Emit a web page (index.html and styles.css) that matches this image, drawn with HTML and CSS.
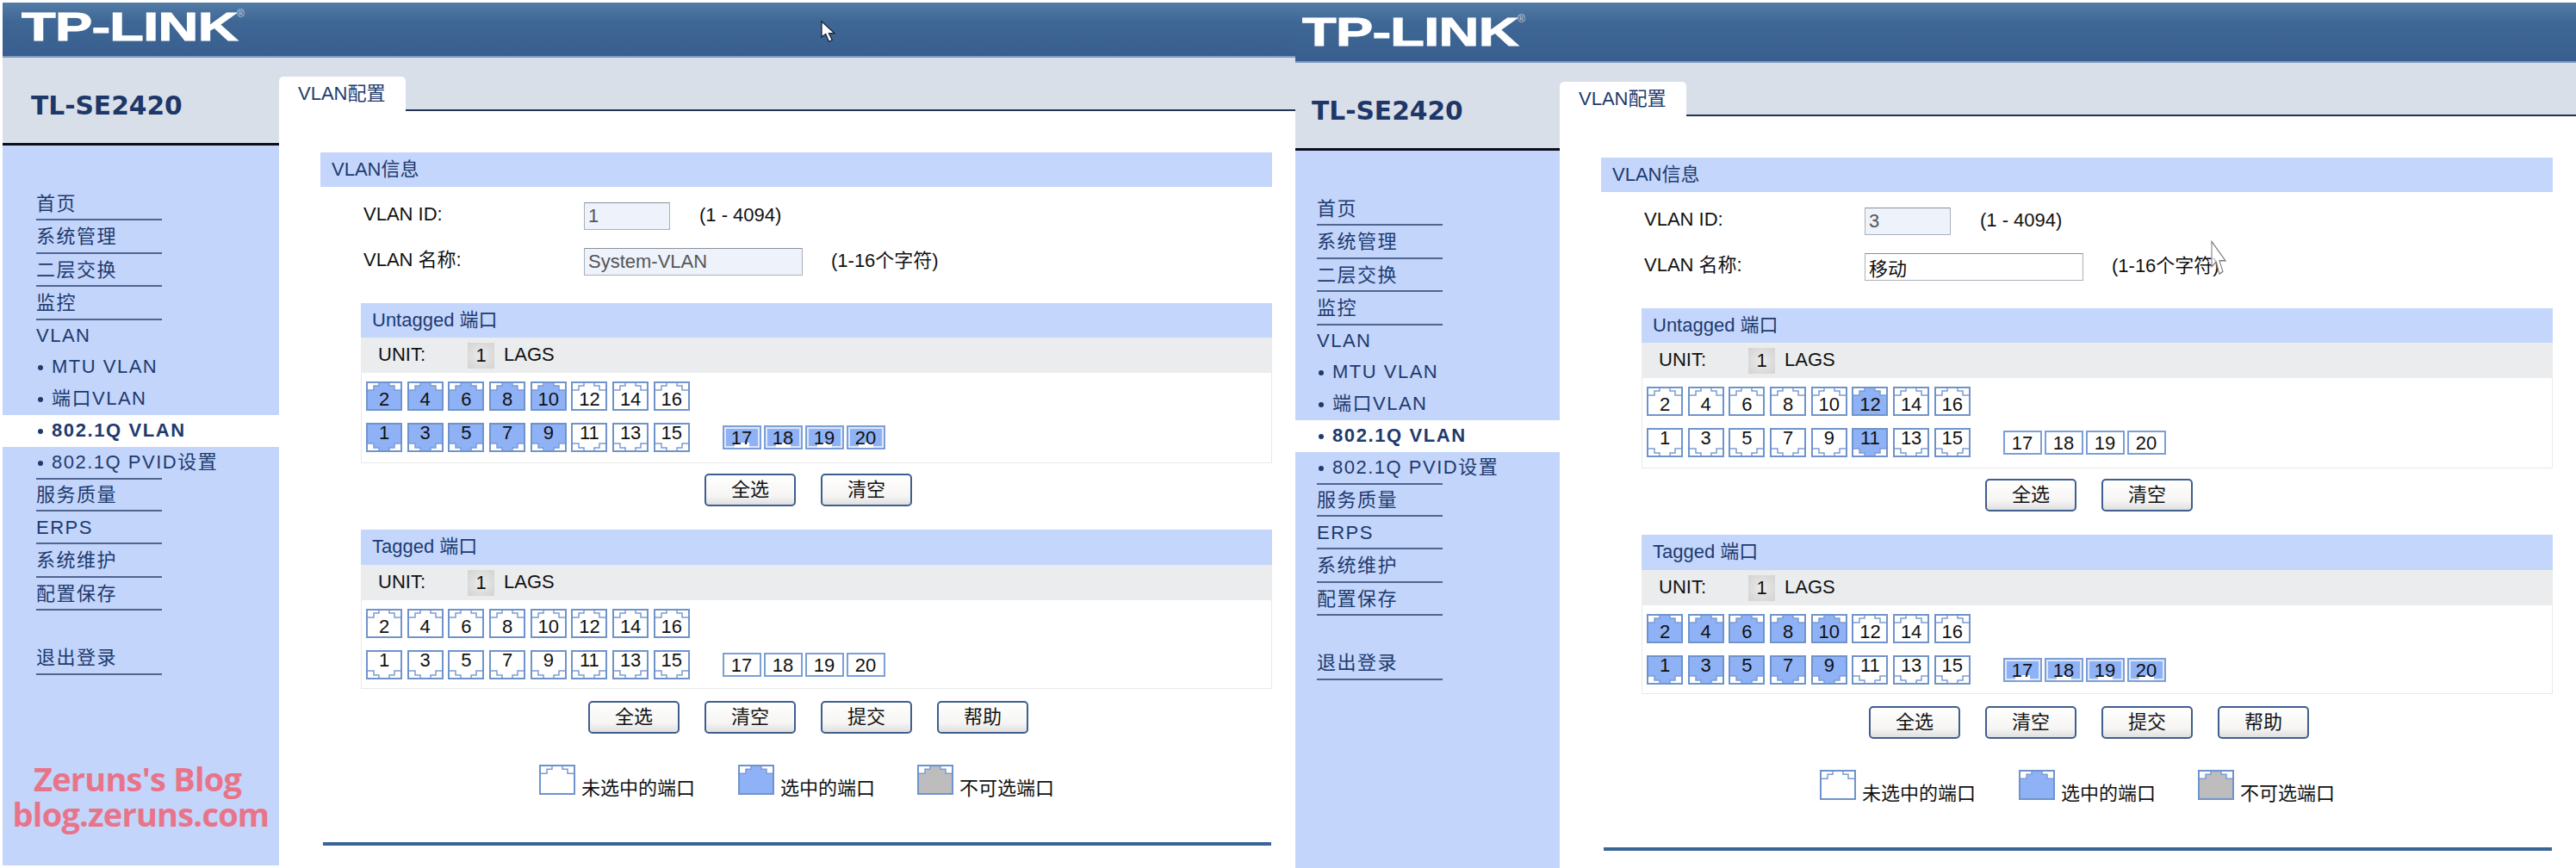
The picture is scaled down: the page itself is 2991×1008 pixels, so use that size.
FILE: index.html
```html
<!DOCTYPE html>
<html lang="zh">
<head>
<meta charset="utf-8">
<title>TL-SE2420 VLAN配置</title>
<link rel="stylesheet" href="styles.css">
</head>
<body>
<svg class="defs" aria-hidden="true">
  <symbol id="jack" viewBox="0 0 42 34" preserveAspectRatio="none">
    <rect x="1" y="1" width="40" height="32" fill="currentColor"/>
    <path d="M1 1H15V5H9V10H1ZM41 1H27V5H33V10H41Z" fill="#fff"/>
    <path d="M1 10H9V5H15V1M41 10H33V5H27V1" fill="none" stroke="#7c9cd4" stroke-width="1.5"/>
    <rect x="1" y="1" width="40" height="32" fill="none" stroke="#6f94cb" stroke-width="2"/>
  </symbol>
  <symbol id="arrow" viewBox="0 0 18 30" preserveAspectRatio="none">
    <path d="M1 1V22L6 18L10 28L14 26L10 17H17Z"/>
  </symbol>
</svg>

<section class="window window-a">
  <div class="frame">
    <header class="banner"><span class="logo">TP-LINK</span><span class="reg">®</span></header>
    <div class="layout">
      <aside class="sidebar">
        <div class="model">TL-SE2420</div>
        <nav class="nav">
          <a class="item">首页</a>
          <a class="item">系统管理</a>
          <a class="item">二层交换</a>
          <a class="item">监控</a>
          <a class="item plain">VLAN</a>
          <a class="sub">MTU VLAN</a>
          <a class="sub">端口VLAN</a>
          <a class="sub active">802.1Q VLAN</a>
          <a class="sub last">802.1Q PVID设置</a>
          <a class="item">服务质量</a>
          <a class="item">ERPS</a>
          <a class="item">系统维护</a>
          <a class="item">配置保存</a>
          <a class="item logout">退出登录</a>
        </nav>
        <div class="watermark"><span class="wm-first">Zeruns's Blog</span><span class="wm-second">blog.zeruns.com</span></div>
      </aside>
      <main class="main">
        <div class="tabs"><span class="tab">VLAN配置</span></div>
        <div class="content">
          <h2 class="bar">VLAN信息</h2>
          <div class="form-row first">
            <label class="field-label">VLAN ID:</label>
            <input class="field field-id" value="1" readonly>
            <span class="hint">(1 - 4094)</span>
          </div>
          <div class="form-row second">
            <label class="field-label">VLAN 名称:</label>
            <input class="field field-name" value="System-VLAN" readonly>
            <span class="hint hint-name">(1-16个字符)</span>
          </div>

          <section class="group">
            <h3 class="bar group-title">Untagged 端口</h3>
            <div class="unit"><span class="unit-label">UNIT:</span><span class="unit-no">1</span><span>LAGS</span></div>
            <div class="ports">
              <div class="port-row">
                <span class="port on"><svg><use href="#jack"/></svg><b>2</b></span>
                <span class="port on"><svg><use href="#jack"/></svg><b>4</b></span>
                <span class="port on"><svg><use href="#jack"/></svg><b>6</b></span>
                <span class="port on"><svg><use href="#jack"/></svg><b>8</b></span>
                <span class="port on"><svg><use href="#jack"/></svg><b>10</b></span>
                <span class="port"><svg><use href="#jack"/></svg><b>12</b></span>
                <span class="port"><svg><use href="#jack"/></svg><b>14</b></span>
                <span class="port"><svg><use href="#jack"/></svg><b>16</b></span>
              </div>
              <div class="port-row">
                <span class="port down on"><svg><use href="#jack"/></svg><b>1</b></span>
                <span class="port down on"><svg><use href="#jack"/></svg><b>3</b></span>
                <span class="port down on"><svg><use href="#jack"/></svg><b>5</b></span>
                <span class="port down on"><svg><use href="#jack"/></svg><b>7</b></span>
                <span class="port down on"><svg><use href="#jack"/></svg><b>9</b></span>
                <span class="port down"><svg><use href="#jack"/></svg><b>11</b></span>
                <span class="port down"><svg><use href="#jack"/></svg><b>13</b></span>
                <span class="port down"><svg><use href="#jack"/></svg><b>15</b></span>
                <div class="sfps">
                  <span class="sfp on">17</span><span class="sfp on">18</span><span class="sfp on">19</span><span class="sfp on">20</span>
                </div>
              </div>
            </div>
          </section>
          <div class="actions actions-top"><button class="btn">全选</button><button class="btn">清空</button></div>

          <section class="group group-tagged">
            <h3 class="bar group-title">Tagged 端口</h3>
            <div class="unit"><span class="unit-label">UNIT:</span><span class="unit-no">1</span><span>LAGS</span></div>
            <div class="ports">
              <div class="port-row">
                <span class="port"><svg><use href="#jack"/></svg><b>2</b></span>
                <span class="port"><svg><use href="#jack"/></svg><b>4</b></span>
                <span class="port"><svg><use href="#jack"/></svg><b>6</b></span>
                <span class="port"><svg><use href="#jack"/></svg><b>8</b></span>
                <span class="port"><svg><use href="#jack"/></svg><b>10</b></span>
                <span class="port"><svg><use href="#jack"/></svg><b>12</b></span>
                <span class="port"><svg><use href="#jack"/></svg><b>14</b></span>
                <span class="port"><svg><use href="#jack"/></svg><b>16</b></span>
              </div>
              <div class="port-row">
                <span class="port down"><svg><use href="#jack"/></svg><b>1</b></span>
                <span class="port down"><svg><use href="#jack"/></svg><b>3</b></span>
                <span class="port down"><svg><use href="#jack"/></svg><b>5</b></span>
                <span class="port down"><svg><use href="#jack"/></svg><b>7</b></span>
                <span class="port down"><svg><use href="#jack"/></svg><b>9</b></span>
                <span class="port down"><svg><use href="#jack"/></svg><b>11</b></span>
                <span class="port down"><svg><use href="#jack"/></svg><b>13</b></span>
                <span class="port down"><svg><use href="#jack"/></svg><b>15</b></span>
                <div class="sfps">
                  <span class="sfp">17</span><span class="sfp">18</span><span class="sfp">19</span><span class="sfp">20</span>
                </div>
              </div>
            </div>
          </section>
          <div class="actions actions-bottom"><button class="btn">全选</button><button class="btn">清空</button><button class="btn">提交</button><button class="btn">帮助</button></div>

          <div class="legend">
            <span class="legend-item"><span class="port"><svg><use href="#jack"/></svg></span>未选中的端口</span>
            <span class="legend-item selected"><span class="port on"><svg><use href="#jack"/></svg></span>选中的端口</span>
            <span class="legend-item disabled"><span class="port off"><svg><use href="#jack"/></svg></span>不可选端口</span>
          </div>
          <div class="foot-line"></div>
        </div>
      </main>
    </div>
  </div>
  <svg class="cursor cursor-solid"><use href="#arrow"/></svg>
</section>

<section class="window window-b">
  <div class="frame">
    <header class="banner"><span class="logo">TP-LINK</span><span class="reg">®</span></header>
    <div class="layout">
      <aside class="sidebar">
        <div class="model">TL-SE2420</div>
        <nav class="nav">
          <a class="item">首页</a>
          <a class="item">系统管理</a>
          <a class="item">二层交换</a>
          <a class="item">监控</a>
          <a class="item plain">VLAN</a>
          <a class="sub">MTU VLAN</a>
          <a class="sub">端口VLAN</a>
          <a class="sub active">802.1Q VLAN</a>
          <a class="sub last">802.1Q PVID设置</a>
          <a class="item">服务质量</a>
          <a class="item">ERPS</a>
          <a class="item">系统维护</a>
          <a class="item">配置保存</a>
          <a class="item logout">退出登录</a>
        </nav>
      </aside>
      <main class="main">
        <div class="tabs"><span class="tab">VLAN配置</span></div>
        <div class="content">
          <h2 class="bar">VLAN信息</h2>
          <div class="form-row first">
            <label class="field-label">VLAN ID:</label>
            <input class="field field-id" value="3" readonly>
            <span class="hint">(1 - 4094)</span>
          </div>
          <div class="form-row second">
            <label class="field-label">VLAN 名称:</label>
            <input class="field field-name field-edit" value="移动" readonly>
            <span class="hint hint-name">(1-16个字符)</span>
          </div>

          <section class="group">
            <h3 class="bar group-title">Untagged 端口</h3>
            <div class="unit"><span class="unit-label">UNIT:</span><span class="unit-no">1</span><span>LAGS</span></div>
            <div class="ports">
              <div class="port-row">
                <span class="port"><svg><use href="#jack"/></svg><b>2</b></span>
                <span class="port"><svg><use href="#jack"/></svg><b>4</b></span>
                <span class="port"><svg><use href="#jack"/></svg><b>6</b></span>
                <span class="port"><svg><use href="#jack"/></svg><b>8</b></span>
                <span class="port"><svg><use href="#jack"/></svg><b>10</b></span>
                <span class="port on"><svg><use href="#jack"/></svg><b>12</b></span>
                <span class="port"><svg><use href="#jack"/></svg><b>14</b></span>
                <span class="port"><svg><use href="#jack"/></svg><b>16</b></span>
              </div>
              <div class="port-row">
                <span class="port down"><svg><use href="#jack"/></svg><b>1</b></span>
                <span class="port down"><svg><use href="#jack"/></svg><b>3</b></span>
                <span class="port down"><svg><use href="#jack"/></svg><b>5</b></span>
                <span class="port down"><svg><use href="#jack"/></svg><b>7</b></span>
                <span class="port down"><svg><use href="#jack"/></svg><b>9</b></span>
                <span class="port down on"><svg><use href="#jack"/></svg><b>11</b></span>
                <span class="port down"><svg><use href="#jack"/></svg><b>13</b></span>
                <span class="port down"><svg><use href="#jack"/></svg><b>15</b></span>
                <div class="sfps">
                  <span class="sfp">17</span><span class="sfp">18</span><span class="sfp">19</span><span class="sfp">20</span>
                </div>
              </div>
            </div>
          </section>
          <div class="actions actions-top"><button class="btn">全选</button><button class="btn">清空</button></div>

          <section class="group group-tagged">
            <h3 class="bar group-title">Tagged 端口</h3>
            <div class="unit"><span class="unit-label">UNIT:</span><span class="unit-no">1</span><span>LAGS</span></div>
            <div class="ports">
              <div class="port-row">
                <span class="port on"><svg><use href="#jack"/></svg><b>2</b></span>
                <span class="port on"><svg><use href="#jack"/></svg><b>4</b></span>
                <span class="port on"><svg><use href="#jack"/></svg><b>6</b></span>
                <span class="port on"><svg><use href="#jack"/></svg><b>8</b></span>
                <span class="port on"><svg><use href="#jack"/></svg><b>10</b></span>
                <span class="port"><svg><use href="#jack"/></svg><b>12</b></span>
                <span class="port"><svg><use href="#jack"/></svg><b>14</b></span>
                <span class="port"><svg><use href="#jack"/></svg><b>16</b></span>
              </div>
              <div class="port-row">
                <span class="port down on"><svg><use href="#jack"/></svg><b>1</b></span>
                <span class="port down on"><svg><use href="#jack"/></svg><b>3</b></span>
                <span class="port down on"><svg><use href="#jack"/></svg><b>5</b></span>
                <span class="port down on"><svg><use href="#jack"/></svg><b>7</b></span>
                <span class="port down on"><svg><use href="#jack"/></svg><b>9</b></span>
                <span class="port down"><svg><use href="#jack"/></svg><b>11</b></span>
                <span class="port down"><svg><use href="#jack"/></svg><b>13</b></span>
                <span class="port down"><svg><use href="#jack"/></svg><b>15</b></span>
                <div class="sfps">
                  <span class="sfp on">17</span><span class="sfp on">18</span><span class="sfp on">19</span><span class="sfp on">20</span>
                </div>
              </div>
            </div>
          </section>
          <div class="actions actions-bottom"><button class="btn">全选</button><button class="btn">清空</button><button class="btn">提交</button><button class="btn">帮助</button></div>

          <div class="legend">
            <span class="legend-item"><span class="port"><svg><use href="#jack"/></svg></span>未选中的端口</span>
            <span class="legend-item selected"><span class="port on"><svg><use href="#jack"/></svg></span>选中的端口</span>
            <span class="legend-item disabled"><span class="port off"><svg><use href="#jack"/></svg></span>不可选端口</span>
          </div>
          <div class="foot-line"></div>
        </div>
      </main>
    </div>
  </div>
  <svg class="cursor cursor-hollow"><use href="#arrow"/></svg>
</section>
</body>
</html>
```

FILE: styles.css
```css
* { box-sizing: border-box; }
html, body { margin: 0; height: 100%; }
body {
  display: flex;
  width: 2991px;
  height: 1008px;
  overflow: hidden;
  background: #fff;
  font: 22px/1.2 "Liberation Sans", "Noto Sans CJK SC", sans-serif;
  color: #111;
}
.defs { position: absolute; width: 0; height: 0; }

.window { position: relative; flex: none; overflow: hidden; }
.window-a { width: 1504px; padding: 3px 0 0 3px; height: 1005px; }
.window-b { width: 1487px; padding-top: 3px; --head: 70px; }
.frame { width: 1501px; }
.window-b .frame { margin-left: -14px; }

/* banner */
.banner {
  display: flex;
  align-items: flex-start;
  height: var(--head, 64px);
  background: linear-gradient(#527ba6 0, #3f6795 35%, #385f8f 100%);
  border-bottom: 2px solid #7d9cc0;
  padding: 8px 0 0 22px;
  color: #fff;
}
.window-b .banner { padding-top: 14px; }
.logo {
  display: block;
  width: 174px;
  font-weight: 700;
  font-size: 46px;
  line-height: 40px;
  letter-spacing: -.5px;
  -webkit-text-stroke: 1px #fff;
  transform: scaleX(1.41);
  transform-origin: 0 50%;
  white-space: nowrap;
}
.reg { margin: -2px 0 0 76px; font-size: 12px; color: #c8d4e4; }

.layout { display: grid; grid-template-columns: 321px 1180px; }

/* sidebar */
.sidebar { position: relative; background: #c3d5fb; height: 1000px; }
.model {
  height: 102px;
  padding: 36px 0 0 33px;
  background: #d9dfe9;
  border-bottom: 3px solid #0c0f18;
  font: 700 29.7px/40px "DejaVu Sans", "Liberation Sans", sans-serif;
  color: #1d3768;
}
.nav { padding-top: 49px; color: #1e3a6e; letter-spacing: 1.5px; }
.item, .sub { display: block; white-space: nowrap; }
.item {
  width: 146px;
  height: 38.4px;
  margin-left: 39px;
  padding-top: 6px;
  border-bottom: 2px solid #4e6690;
}
.item.plain { height: 36px; border-bottom: 0; padding-top: 5px; }
.sub {
  position: relative;
  height: 37px;
  padding: 5px 0 0 57px;
}
.sub::before {
  content: "";
  position: absolute;
  left: 41px;
  top: 16px;
  width: 6px;
  height: 6px;
  border-radius: 50%;
  background: #1e3a6e;
}
.sub.active { background: #fff; font-weight: 700; letter-spacing: 1.6px; }
.sub.last::after {
  content: "";
  position: absolute;
  left: 39px;
  bottom: -1px;
  width: 146px;
  border-bottom: 2px solid #4e6690;
}
.item.logout { margin-top: 36px; }
.watermark {
  position: absolute;
  left: 0;
  right: 0;
  top: 817px;
  text-align: center;
  font: 700 38px/41px "Open Sans", "Liberation Sans", sans-serif;
  letter-spacing: -.8px;
  color: #e8748a;
}
.wm-first, .wm-second { display: block; height: 41px; }
.wm-first { margin-right: 8px; }

/* main */
.tabs {
  display: flex;
  align-items: flex-end;
  height: 62px;
  background: #d9dfe9;
  border-bottom: 2px solid #22324f;
}
.tab {
  width: 147px;
  height: 40px;
  margin-bottom: -2px;
  padding: 7px 0 0 22px;
  background: #fff;
  border-radius: 5px 5px 0 0;
  color: #1e3a6e;
}
.content { padding: 48px 0 0 48px; }
.bar {
  width: 1105px;
  height: 40px;
  margin: 0;
  padding: 7px 0 0 13px;
  font: inherit;
  background: #c4d6fc;
  color: #1e3a6e;
}

.form-row { display: flex; align-items: center; height: 32px; padding-left: 50px; }
.form-row.first { margin-top: 18px; }
.form-row.second { margin-top: 21px; }
.field-label { width: 256px; margin-top: -3px; }
.field {
  height: 32px;
  padding: 0 4px;
  font: inherit;
  color: #555;
  background: #eef3fb;
  border: 1px solid #aab0ba;
  border-top-color: #8a9098;
  border-radius: 0;
  outline: 0;
}
.field-id { width: 100px; }
.field-name { width: 254px; }
.field-edit { background: #fff; color: #111; }
.hint { margin-left: 34px; margin-top: -1px; }
.hint-name { margin-left: 33px; }

.group { width: 1058px; margin: 32px 0 0 47px; }
.group-tagged { margin-top: 27px; }
.group-title { width: auto; height: 40px; }
.group-tagged .group-title { height: 41px; }
.unit {
  display: flex;
  align-items: center;
  height: 41px;
  padding-left: 20px;
  background: #ebeced;
}
.unit-label { width: 104px; }
.unit-no {
  width: 31px;
  height: 30px;
  margin-right: 11px;
  text-align: center;
  line-height: 30px;
  background: radial-gradient(#ececec, #d2d2d2);
}
.ports {
  height: 105px;
  padding: 10px 0 0 5px;
  border: 1px solid #e9e9e6;
  border-top: 0;
}
.group-tagged .ports { height: 103px; }
.port-row { display: flex; gap: 5.7px; height: 34px; }
.port-row + .port-row { margin-top: 14px; }

.port { position: relative; display: block; flex: none; width: 42px; height: 34px; color: #fff; }
.port.on { color: #8fb2f6; }
.port.off { color: #bdbdbd; }
.port svg { display: block; width: 100%; height: 100%; }
.port.down svg { transform: scaleY(-1); }
.port b {
  position: absolute;
  left: 0;
  right: 0;
  top: 9px;
  text-align: center;
  font-weight: 400;
  font-size: 22px;
  line-height: 24px;
  color: #111;
}
.port.down b { top: 0; }

.sfps { display: flex; gap: 3px; margin: 3px 0 0 32px; }
.sfp {
  position: relative;
  isolation: isolate;
  width: 45px;
  height: 28px;
  text-align: center;
  line-height: 26px;
  background: #fff;
  border: 2px solid #7c9fd6;
}
.sfp.on {
  background: #8fb2f6;
  box-shadow: inset 0 0 0 2px #dce7fb;
}
.sfp.on::before {
  content: "";
  position: absolute;
  z-index: -1;
  left: 12px;
  right: 12px;
  bottom: 0;
  height: 6px;
  background: #fff;
}

.actions { display: flex; justify-content: center; gap: 29px; width: 1133px; }
.actions-top { margin-top: 12px; }
.actions-bottom { margin-top: 14px; }
.btn {
  width: 106px;
  height: 38px;
  padding: 0;
  font: inherit;
  color: #111;
  background: linear-gradient(#fff 0, #f6f5f3 70%, #dfdfe0 100%);
  border: 2px solid #3f5f8e;
  border-radius: 5px;
}

.legend { display: flex; margin: 36px 0 0 254px; }
.legend-item {
  display: flex;
  align-items: flex-end;
  gap: 7px;
  height: 40px;
  line-height: 24px;
  margin-right: 50px;
  white-space: nowrap;
}
.legend-item.selected { margin-right: 49px; }
.legend-item .port { height: 35px; align-self: flex-start; }
.foot-line { width: 1101px; height: 4px; margin: 50px 0 0 3px; background: #3a6496; }

/* mouse pointers in the screenshot */
.cursor { position: absolute; }
.cursor-solid { left: 953px; top: 24px; width: 17px; height: 26px; fill: #fff; stroke: #1a2740; stroke-width: 1.5px; }
.cursor-hollow { left: 1063px; top: 279px; width: 18px; height: 42px; fill: rgba(255,255,255,.75); stroke: #777; stroke-width: 1px; }
```
